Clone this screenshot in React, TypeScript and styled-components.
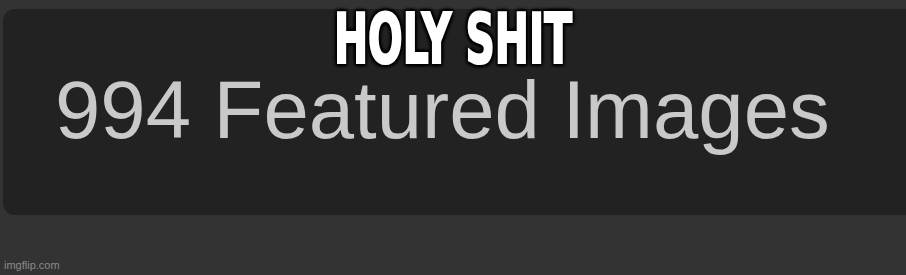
import React from "react";
import styled, { createGlobalStyle } from "styled-components";

const Global = createGlobalStyle`
  html, body { margin: 0; padding: 0; background: #333333; }
  body { width: 906px; height: 275px; overflow: hidden; }
`;

const Page = styled.div`
  position: relative;
  width: 906px;
  height: 275px;
  box-sizing: border-box;
  padding: 9px 0 0 3px;
  background: #333333;
  overflow: hidden;
`;

const Card = styled.div`
  width: 920px;
  height: 206px;
  box-sizing: border-box;
  background: #222222;
  border-radius: 12px;
  display: flex;
  align-items: flex-start;
  padding: 60px 0 0 52px;
`;

const Count = styled.div`
  font-family: "Liberation Sans", Arial, sans-serif;
  font-size: 81.5px;
  line-height: 1;
  color: #c9c9c9;
  white-space: nowrap;
`;

const Caption = styled.div`
  position: absolute;
  top: 5px;
  left: 0;
  right: 0;
  text-align: center;
  font-family: "DejaVu Sans Condensed", "Liberation Sans Narrow", "Liberation Sans", sans-serif;
  font-weight: 700;
  font-size: 63px;
  line-height: 1;
  color: #ffffff;
  transform: scale(0.72, 1.09);
  transform-origin: 50% 0;
  -webkit-text-stroke: 2px #ffffff;
  text-shadow: 3px 3px 3px #000, -3px -3px 3px #000, 3px -3px 3px #000, -3px 3px 3px #000,
    0 0 5px #000;
  white-space: nowrap;
`;

const Watermark = styled.div`
  position: absolute;
  left: 4px;
  bottom: 4px;
  font-family: "Liberation Sans", Arial, sans-serif;
  font-size: 11px;
  color: #8a8a8a;
`;

export default function App() {
  return (
    <>
      <Global />
      <Page>
        <Card>
          <Count>994 Featured Images</Count>
        </Card>
        <Caption>HOLY SHIT</Caption>
        <Watermark>imgflip.com</Watermark>
      </Page>
    </>
  );
}
